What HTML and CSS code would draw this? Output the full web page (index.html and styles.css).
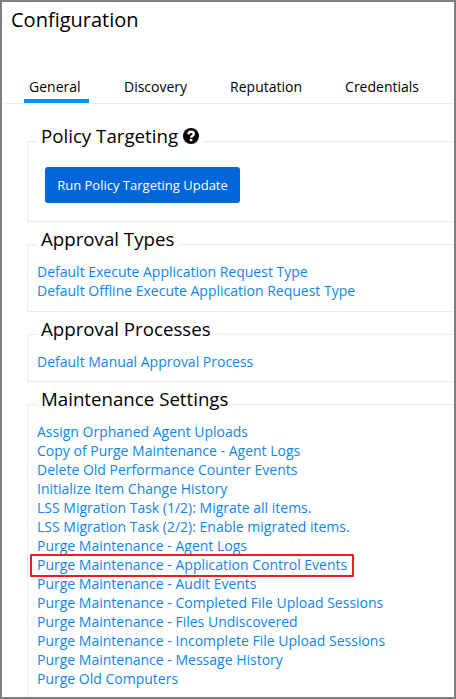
FILE: index.html
```html
<!DOCTYPE html>
<html lang="en">
<head>
<meta charset="utf-8">
<title>Configuration</title>
<link rel="stylesheet" href="styles.css">
</head>
<body>
<main class="page">
  <h1>Configuration</h1>
  <nav class="tabs">
    <a class="tab active">General</a><a class="tab">Discovery</a><a class="tab">Reputation</a><a class="tab">Credentials</a>
  </nav>
  <section class="group targeting">
    <h2>Policy Targeting<svg class="help" viewBox="0 0 16 16"><circle cx="8" cy="8" r="8"/><path d="M5.300 6.200C5.600 4.500 6.600 3.700 8 3.700c1.700 0 2.800 1 2.800 2.200 0 1.900-2.600 1.900-2.600 3.900"/><rect x="6.900" y="10.900" width="2.500" height="2.300"/></svg></h2>
    <button class="run">Run Policy Targeting Update</button>
  </section>
  <section class="group types">
    <h2>Approval Types</h2>
    <ul>
      <li><a>Default Execute Application Request Type</a></li>
      <li><a>Default Offline Execute Application Request Type</a></li>
    </ul>
  </section>
  <section class="group processes">
    <h2>Approval Processes</h2>
    <ul>
      <li><a>Default Manual Approval Process</a></li>
    </ul>
  </section>
  <section class="group maintenance">
    <h2>Maintenance Settings</h2>
    <ul>
      <li><a>Assign Orphaned Agent Uploads</a></li>
      <li><a>Copy of Purge Maintenance - Agent Logs</a></li>
      <li><a>Delete Old Performance Counter Events</a></li>
      <li><a>Initialize Item Change History</a></li>
      <li><a>LSS Migration Task (1/2): Migrate all items.</a></li>
      <li><a>LSS Migration Task (2/2): Enable migrated items.</a></li>
      <li><a>Purge Maintenance - Agent Logs</a></li>
      <li><a class="marked">Purge Maintenance - Application Control Events</a></li>
      <li><a>Purge Maintenance - Audit Events</a></li>
      <li><a>Purge Maintenance - Completed File Upload Sessions</a></li>
      <li><a>Purge Maintenance - Files Undiscovered</a></li>
      <li><a>Purge Maintenance - Incomplete File Upload Sessions</a></li>
      <li><a>Purge Maintenance - Message History</a></li>
      <li><a>Purge Old Computers</a></li>
    </ul>
  </section>
</main>
</body>
</html>
```
FILE: styles.css
```css
*, *::before { box-sizing: border-box; }
body { margin: 0; background: #fff; }
.page {
  width: 456px;
  height: 699px;
  overflow: hidden;
  border: 2px solid #7f7f7f;
  font: 14px/19px "Open Sans", sans-serif;
  color: #000;
}
h1 { margin: 4px 0 0 9px; font-size: 20px; line-height: 28px; font-weight: 400; }
.tabs { display: flex; height: 34px; margin: 36px 0 0 3px; padding-left: 19px; border-bottom: 1px solid #ebebeb; }
.tab { height: 33px; margin-right: 25px; padding: 7px 9px 0; }
.tab.active { width: 65px; margin-right: 26px; padding: 7px 5px 0; border-bottom: 4px solid #0093ee; }
.group { margin: 22px 0 0 25px; border: 1px solid #e9edf0; border-right: 0; }
h2 { width: max-content; margin: -20px 0 0 9px; padding: 0 4px; background: #fff; font-size: 18.7px; line-height: 28px; font-weight: 400; }
.targeting { height: 81px; margin-top: 37px; }
.types { height: 68px; }
.processes { height: 48px; }
.maintenance { height: 320px; }
.help { width: 16px; height: 16px; margin-left: 5px; vertical-align: -1px; }
.help path { fill: none; stroke: #fff; stroke-width: 2.4; }
.help rect { fill: #fff; }
.run { display: block; width: 195px; height: 36px; margin: 17px 0 0 17px; padding: 0; border: 0; border-radius: 3px; background: #0066d9; color: #fff; font: 13px/19px "Open Sans", sans-serif; }
ul { list-style: none; margin: 9px 0 0 9px; padding: 0; }
li { height: 19px; white-space: nowrap; }
li a { color: #0f86e8; }
.marked { display: inline-block; position: relative; }
.marked::before { content: ""; position: absolute; left: -7px; top: -1px; width: 324px; height: 23px; border: 2px solid #ec1c24; border-radius: 1px; }
```
